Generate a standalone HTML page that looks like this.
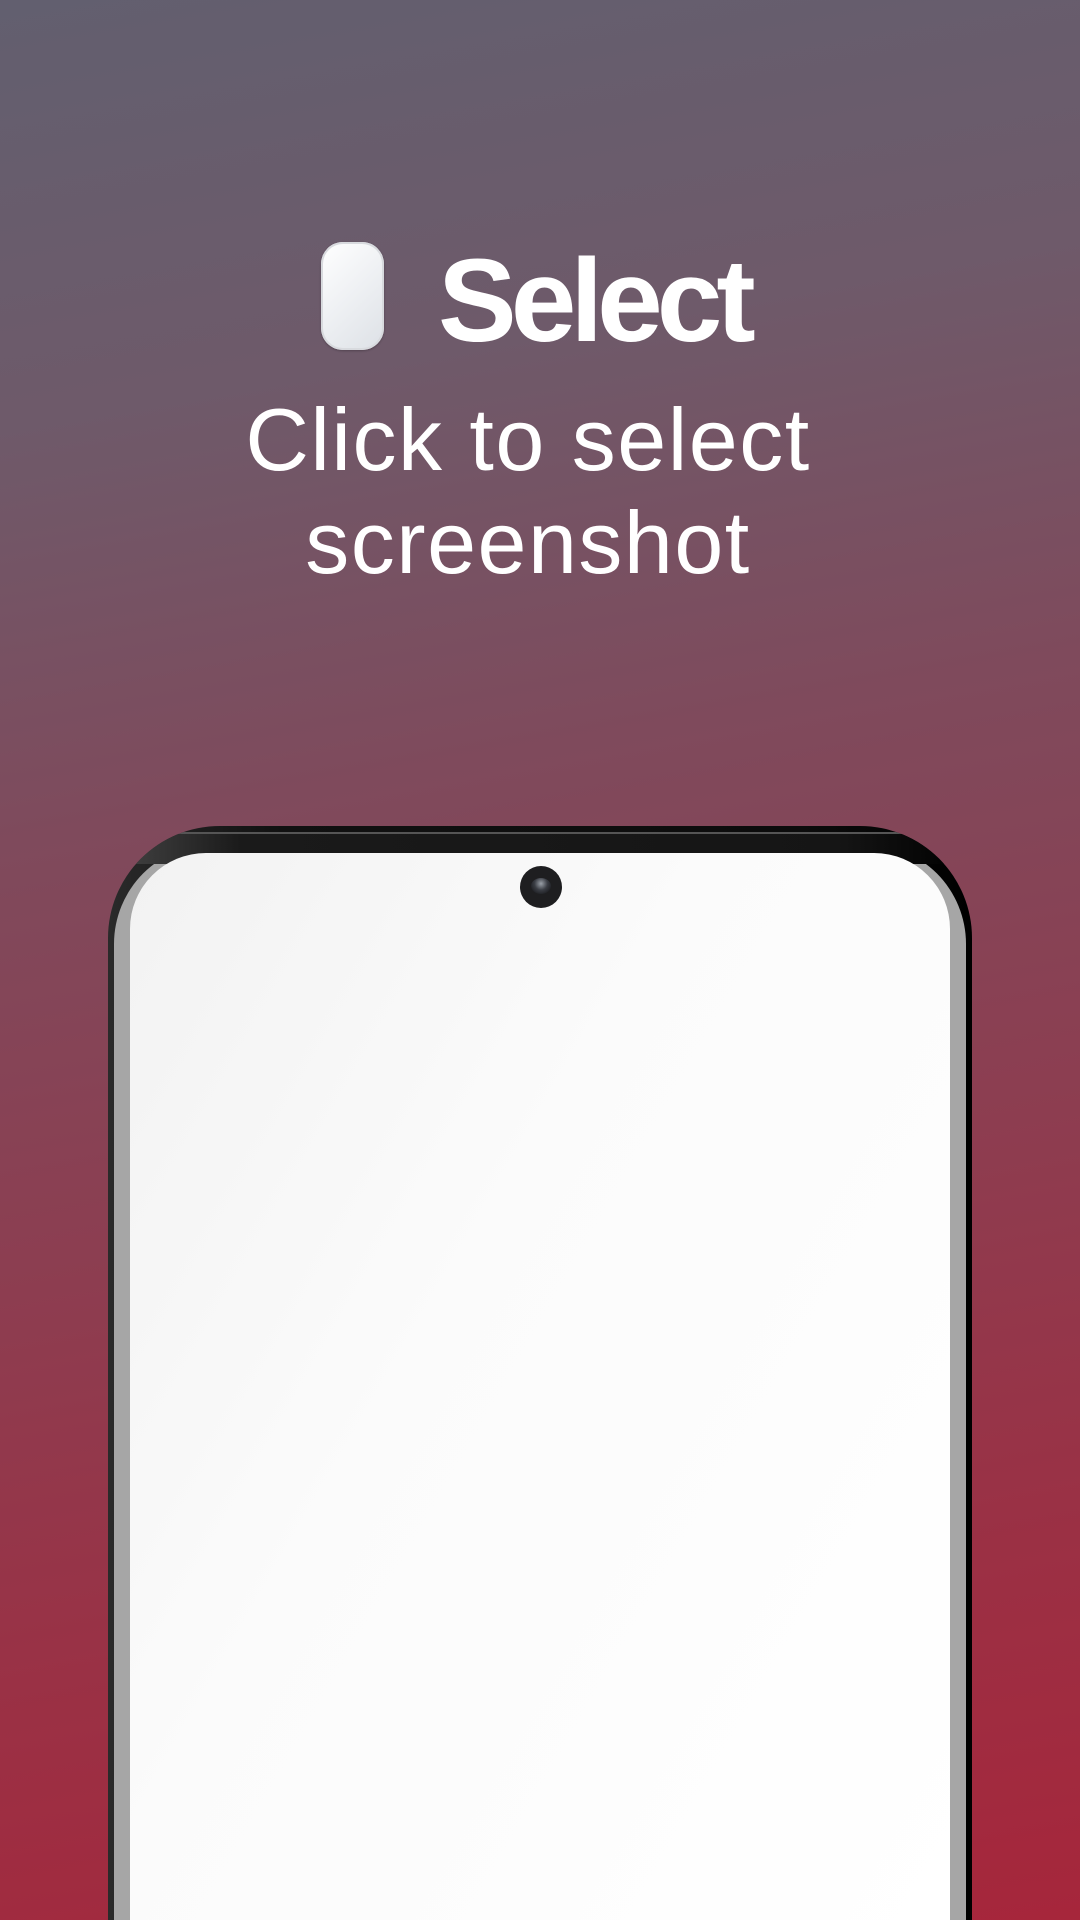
<!DOCTYPE html>
<html style="height:1920px;overflow:hidden"><head><style>
html,body{margin:0;padding:0}
body{width:1080px;height:1920px;overflow:hidden;position:relative;background:linear-gradient(170deg,#625f6f 0%,#6e5a6a 20%,#7f4a5c 40%,#8c3e51 60%,#9a3145 80%,#a6263b 100%);font-family:"Liberation Sans",sans-serif;color:#fff}
.mouse{position:absolute;left:321px;top:242px;width:63px;height:108px;border-radius:22px;background:linear-gradient(135deg,#ffffff 0%,#eef0f3 50%,#dde1e6 100%);box-shadow:inset 0 0 0 2px #d8dade,0 1px 2px rgba(0,0,0,.25)}
.title{position:absolute;left:438px;top:236px;font-weight:bold;font-size:118px;line-height:130px;letter-spacing:-6px;white-space:nowrap}
.sub{position:absolute;left:-12px;width:1080px;top:388px;text-align:center;font-size:88px;line-height:103px;letter-spacing:1.5px}
.phone{position:absolute;left:108px;top:826px;width:864px;height:1094px;border-radius:112px 112px 0 0;background:linear-gradient(90deg,#2a2a2a,#111 20%,#0c0c0c 80%,#000);overflow:hidden}
.rim{position:absolute;left:6px;top:18px;right:6px;bottom:0;border-radius:100px 100px 0 0;background:#a6a6a6}
.rim2{position:absolute;left:6px;top:6px;right:6px;height:30px;border-radius:106px 106px 0 0;border-top:2px solid #555;background:linear-gradient(90deg,#444,#1a1a1a 15%,#151515 85%,#000)}
.screen{position:absolute;left:22px;top:27px;width:820px;bottom:0;border-radius:76px 76px 0 0;background:linear-gradient(120deg,#f2f2f2 0%,#fbfbfb 40%,#fff 100%)}
.cam{position:absolute;left:520px;top:866px;width:42px;height:42px;border-radius:50%;background:#1e1e20}
.cam:after{content:"";position:absolute;left:11px;top:12px;width:20px;height:16px;border-radius:50%;background:radial-gradient(circle at 50% 35%,#9aa0a8 0%,#3a3d44 45%,#0c0c0e 100%)}
</style></head><body>
<div class="mouse"></div>
<div class="title">Select</div>
<div class="sub">Click to select<br>screenshot</div>
<div class="phone"><div class="rim"></div><div class="rim2"></div><div class="screen"></div></div>
<div class="cam"></div>
</body></html>
